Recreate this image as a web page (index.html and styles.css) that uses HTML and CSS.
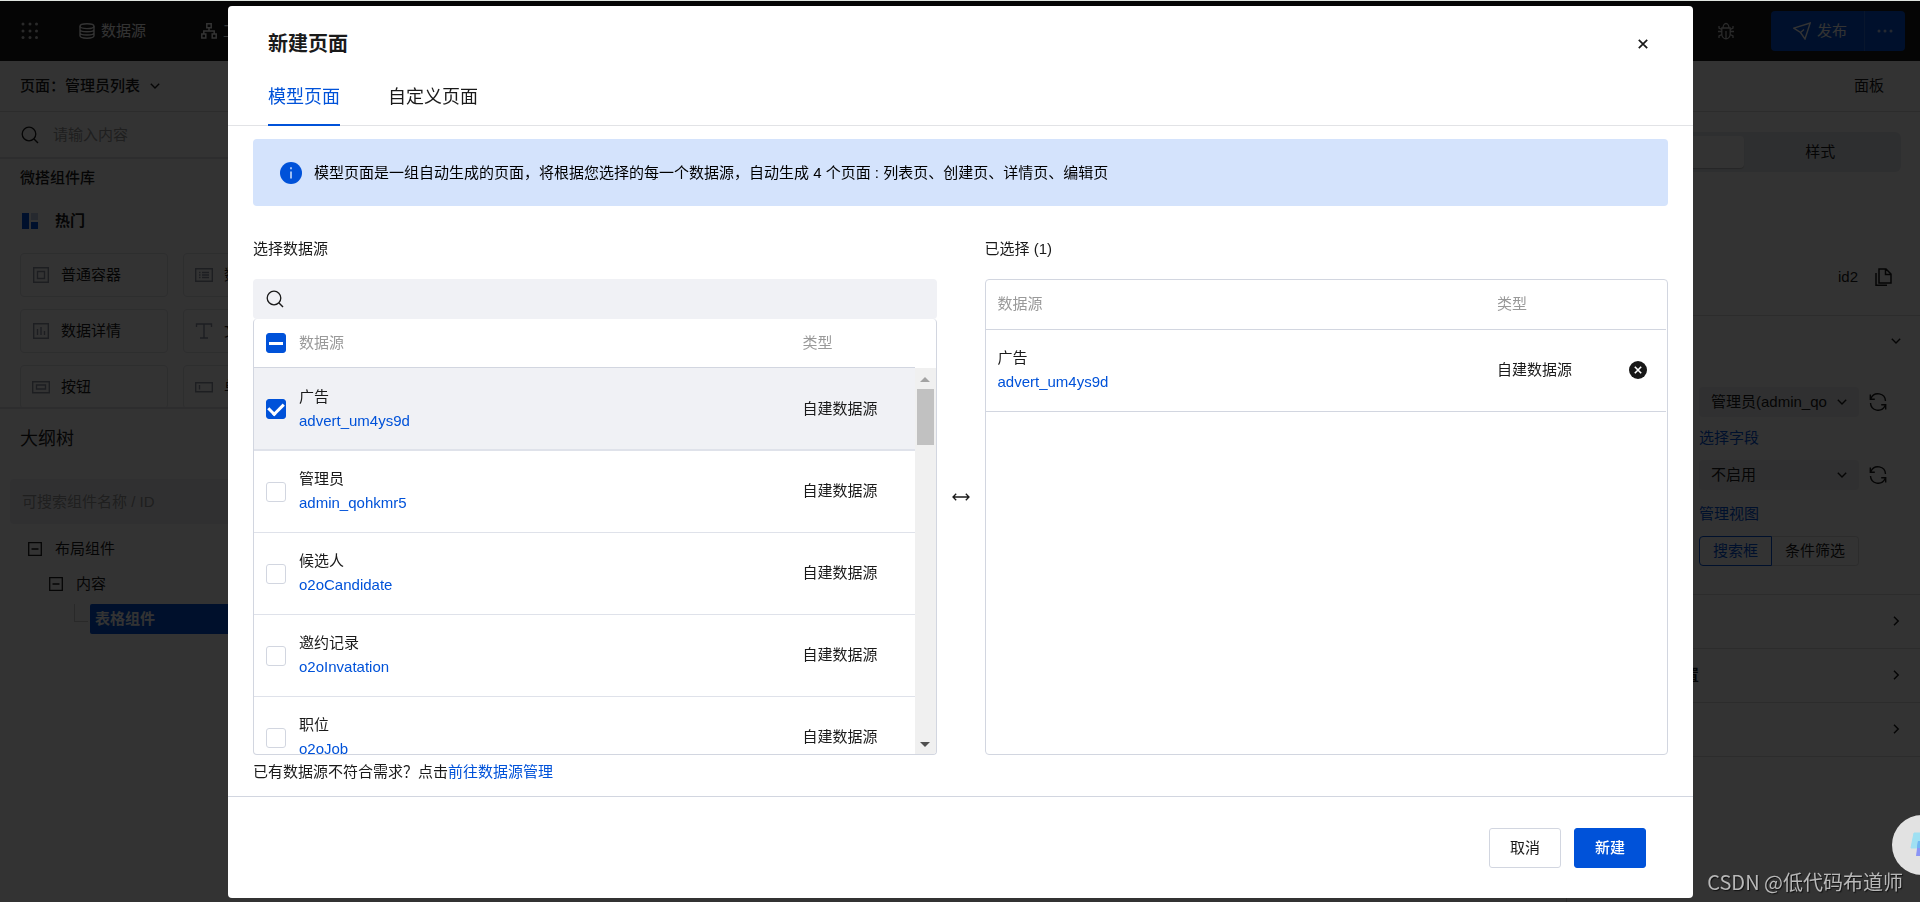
FILE: index.html
```html
<!DOCTYPE html>
<html lang="zh-CN">
<head>
<meta charset="utf-8">
<meta name="viewport" content="width=device-width, initial-scale=1">
<title>新建页面</title>
<link rel="stylesheet" href="styles.css">
</head>
<body>
<svg class="defs" aria-hidden="true">
  <symbol id="i-search" viewBox="0 0 18 18"><circle cx="8" cy="8" r="6.8" fill="none" stroke="currentColor" stroke-width="1.3"/><path d="M12.8 12.8 17 17" stroke="currentColor" stroke-width="1.4"/></symbol>
  <symbol id="i-down" viewBox="0 0 10 10"><path d="M.8 2.8 5 7 9.200 2.800" fill="none" stroke="currentColor" stroke-width="1.4"/></symbol>
  <symbol id="i-right" viewBox="0 0 10 10"><path d="M3 .8 7.200 5 3 9.200" fill="none" stroke="currentColor" stroke-width="1.5"/></symbol>
  <symbol id="i-minus" viewBox="0 0 14 14"><path d="M.7.7h12.600v12.600H.7zM3.500 7h7" fill="none" stroke="currentColor" stroke-width="1.300"/></symbol>
  <symbol id="i-sync" viewBox="0 0 18 18"><path d="M2 5.200A7.600 7.600 0 0 1 16.500 8M16 12.800A7.600 7.600 0 0 1 1.500 10M1.300 1.600v4.600h4.500M16.700 16.400v-4.600h-4.500" fill="none" stroke="currentColor" stroke-width="1.400"/></symbol>
</svg>

<div class="app">
  <header class="topbar">
    <nav class="nav">
      <button class="plain" aria-label="应用"><svg width="18" height="18" viewBox="0 0 18 18" fill="currentColor" opacity=".8"><circle cx="2" cy="2" r="1.500"/><circle cx="9" cy="2" r="1.500"/><circle cx="15.500" cy="2" r="1.500"/><circle cx="2" cy="9" r="1.500"/><circle cx="9" cy="9" r="1.500"/><circle cx="15.500" cy="9" r="1.500"/><circle cx="2" cy="15.500" r="1.500"/><circle cx="9" cy="15.500" r="1.500"/><circle cx="15.500" cy="15.500" r="1.500"/></svg></button>
      <a href="#" class="nav-link"><svg width="16" height="16" viewBox="0 0 16 16" fill="none" stroke="currentColor" stroke-width="1.400"><ellipse cx="8" cy="3.200" rx="7" ry="2.400"/><path d="M1 3.200v9.600c0 1.400 3 2.400 7 2.400s7-1 7-2.400V3.200M1 6.600c0 1.200 3 2.200 7 2.200s7-1 7-2.200M1 9.800C1 11 4 12 8 12s7-1 7-2.200"/></svg>数据源</a>
      <a href="#" class="nav-link"><svg width="16" height="16" viewBox="0 0 16 16" fill="none" stroke="currentColor" stroke-width="1.500"><path d="M5.800.8h4.400v4H5.800zM.8 11h4v4h-4zM11.200 11h4v4h-4zM8 5v3M2.800 11V8h10.400v3"/></svg>工作流</a>
    </nav>
    <div class="actions">
      <button class="plain" aria-label="调试"><svg width="16" height="18" viewBox="0 0 16 18" fill="none" stroke="currentColor" stroke-width="1.300" opacity=".8"><path d="M3.800 6h8.400v6a4.200 4.800 0 0 1-8.400 0zM5 6a3 4.500 0 0 1 6 0M8 9v8M0 9.500h3.800M12.200 9.500H16M1 4v2l2.800 1.500M15 4v2l-2.800 1.500M1 16v-2l2.800-1.500M15 16v-2l-2.800-1.500"/></svg></button>
      <div class="publish">
        <button class="publish-main"><svg width="18" height="18" viewBox="0 0 18 18" fill="none" stroke="currentColor" stroke-width="1.400"><path d="M.8 6.200 17.200 1 12 17 7.500 10.500zM7.500 10.500 11 7.500"/></svg>发布</button>
        <button class="publish-more" aria-label="更多"><svg width="16" height="4" viewBox="0 0 16 4" fill="currentColor"><circle cx="2" cy="2" r="1.500"/><circle cx="8" cy="2" r="1.500"/><circle cx="14" cy="2" r="1.500"/></svg></button>
      </div>
    </div>
  </header>

  <div class="workspace">
    <aside class="side">
      <button class="page-switch">页面：管理员列表<svg width="10" height="10"><use href="#i-down"/></svg></button>
      <label class="side-search"><svg width="18" height="18"><use href="#i-search"/></svg><input type="text" placeholder="请输入内容" aria-label="搜索组件"></label>
      <section class="library">
        <h2>微搭组件库</h2>
        <h3><svg width="16" height="16" viewBox="0 0 16 16"><path fill="#0052d9" d="M0 0h7v16H0zM9 9h7v7H9z"/><path fill="#bccbe8" d="M9 0h7v7H9z"/></svg>热门</h3>
        <div class="cards">
          <button class="card"><svg width="18" height="16" viewBox="0 0 18 16"><path d="M1.700.7h14.600v14.600H1.700zM5.500 4.500h7v7h-7z"/></svg>普通容器</button>
          <button class="card"><svg width="18" height="16" viewBox="0 0 18 16"><path d="M.7 1.700h16.600v12.600H.7zM4 5.500h1.500M7 5.500h7M4 8h1.500M7 8h7M4 10.500h1.500M7 10.500h7"/></svg>数据列表</button>
          <button class="card"><svg width="18" height="16" viewBox="0 0 18 16"><path d="M1.700.7h14.600v14.600H1.700zM5.500 6v6M9 4v8M12.500 8v4"/></svg>数据详情</button>
          <button class="card"><svg width="18" height="16" viewBox="0 0 18 16"><path d="M1.500 4V1h15v3M9 1v14M5 15h8"/></svg>文本</button>
          <button class="card"><svg width="18" height="16" viewBox="0 0 18 16"><path d="M.7 2.700h16.600v11H.7zM4.500 6h9v4h-9z"/></svg>按钮</button>
          <button class="card"><svg width="18" height="16" viewBox="0 0 18 16"><path d="M.7 3.700h16.600v9H.7zM4.500 6v4.500"/></svg>单行输入</button>
        </div>
      </section>
      <section class="outline">
        <h2>大纲树</h2>
        <input class="tree-search" type="text" placeholder="可搜索组件名称 / ID" aria-label="搜索大纲树">
        <ul class="tree">
          <li class="level-1"><svg width="14" height="14"><use href="#i-minus"/></svg>布局组件</li>
          <li class="level-2"><svg width="14" height="14"><use href="#i-minus"/></svg>内容</li>
          <li class="level-3"><i class="branch"></i><span class="current">表格组件</span></li>
        </ul>
      </section>
    </aside>

    <aside class="props">
      <div class="props-head">面板</div>
      <div class="props-basic">
        <div class="segment"><button class="on">属性</button><button>样式</button></div>
        <div class="ident">id2<svg width="17" height="18" viewBox="0 0 17 18" fill="none" stroke="currentColor" stroke-width="1.500"><path d="M4 1h7l5 5v9H4zM10.500 1v5.500H16M1 5v12.200h11"/></svg></div>
      </div>
      <div class="props-data">
        <svg class="fold" width="10" height="10"><use href="#i-down"/></svg>
        <div class="field"><button class="pick">管理员(admin_qo<svg width="10" height="10"><use href="#i-down"/></svg></button><svg width="18" height="18"><use href="#i-sync"/></svg></div>
        <a href="#">选择字段</a>
        <div class="field"><button class="pick">不启用<svg width="10" height="10"><use href="#i-down"/></svg></button><svg width="18" height="18"><use href="#i-sync"/></svg></div>
        <a href="#">管理视图</a>
        <div class="toggle"><button class="on">搜索框</button><button>条件筛选</button></div>
      </div>
      <div class="fold-row"><span></span><svg width="10" height="10"><use href="#i-right"/></svg></div>
      <div class="fold-row"><span>全局按钮区设置</span><svg width="10" height="10"><use href="#i-right"/></svg></div>
      <div class="fold-row"><span></span><svg width="10" height="10"><use href="#i-right"/></svg></div>
    </aside>
  </div>
</div>

<div class="mask">
  <section class="modal" role="dialog" aria-labelledby="dlg-title">
    <header class="modal-head">
      <h1 id="dlg-title">新建页面</h1>
      <button class="plain" aria-label="关闭"><svg width="10" height="10" viewBox="0 0 10 10"><path d="M.8.8l8.400 8.400M9.200.8.8 9.200" stroke="currentColor" stroke-width="1.700"/></svg></button>
    </header>
    <div class="tabs" role="tablist">
      <button role="tab" aria-selected="true" class="tab on">模型页面</button>
      <button role="tab" aria-selected="false" class="tab">自定义页面</button>
    </div>
    <div class="modal-body">
      <p class="alert"><svg width="22" height="22" viewBox="0 0 22 22"><circle cx="11" cy="11" r="11" fill="#0052d9"/><path d="M11 9.500v7M11 5.300v2" stroke="#d4e3fc" stroke-width="1.500"/></svg>模型页面是一组自动生成的页面，将根据您选择的每一个数据源，自动生成 4 个页面 : 列表页、创建页、详情页、编辑页</p>
      <div class="transfer">
        <div class="pane">
          <h2>选择数据源</h2>
          <label class="search"><svg width="18" height="18"><use href="#i-search"/></svg><input type="text" aria-label="搜索数据源"></label>
          <div class="box source">
            <table class="list">
              <thead><tr><th><input type="checkbox" class="check partial" aria-label="全选"></th><th>数据源</th><th>类型</th></tr></thead>
              <tbody>
                <tr class="picked"><td><input type="checkbox" class="check" id="c1" checked></td><td><label for="c1">广告</label><a href="#">advert_um4ys9d</a></td><td>自建数据源</td></tr>
                <tr><td><input type="checkbox" class="check" id="c2"></td><td><label for="c2">管理员</label><a href="#">admin_qohkmr5</a></td><td>自建数据源</td></tr>
                <tr><td><input type="checkbox" class="check" id="c3"></td><td><label for="c3">候选人</label><a href="#">o2oCandidate</a></td><td>自建数据源</td></tr>
                <tr><td><input type="checkbox" class="check" id="c4"></td><td><label for="c4">邀约记录</label><a href="#">o2oInvatation</a></td><td>自建数据源</td></tr>
                <tr><td><input type="checkbox" class="check" id="c5"></td><td><label for="c5">职位</label><a href="#">o2oJob</a></td><td>自建数据源</td></tr>
              </tbody>
            </table>
            <div class="scrollbar" aria-hidden="true">
              <svg width="10" height="5" viewBox="0 0 10 5"><path d="M0 5 5 0l5 5z" fill="#a3a3a3"/></svg>
              <i class="thumb"></i>
              <svg width="10" height="5" viewBox="0 0 10 5"><path d="M0 0l5 5 5-5z" fill="#505050"/></svg>
            </div>
          </div>
        </div>
        <svg class="swap" width="18" height="8" viewBox="0 0 18 8" fill="none" stroke="currentColor" stroke-width="1.300"><path d="M1 4h16M4.200.8 1 4l3.200 3.200M13.800.8 17 4l-3.200 3.200"/></svg>
        <div class="pane">
          <h2>已选择 (1)</h2>
          <div class="box">
            <table class="list chosen">
              <thead><tr><th>数据源</th><th>类型</th><th></th></tr></thead>
              <tbody>
                <tr><td><span>广告</span><a href="#">advert_um4ys9d</a></td><td>自建数据源</td><td><button class="plain" aria-label="移除"><svg width="18" height="18" viewBox="0 0 18 18"><circle cx="9" cy="9" r="9" fill="#181818"/><path d="M5.800 5.800l6.400 6.400M12.200 5.800l-6.400 6.400" stroke="#fff" stroke-width="1.600"/></svg></button></td></tr>
              </tbody>
            </table>
          </div>
        </div>
      </div>
      <p class="hint">已有数据源不符合需求？点击<a href="#">前往数据源管理</a></p>
    </div>
    <footer class="modal-foot">
      <button class="btn">取消</button>
      <button class="btn primary">新建</button>
    </footer>
  </section>
</div>

<button class="helper" aria-label="助手"><svg width="60" height="60" viewBox="0 0 60 60"><path d="M22 18h14l-3 15H19z" fill="#9fe0f2" stroke="#9fe0f2" stroke-width="1" stroke-linejoin="round"/><path d="M26 26h14l-3 15H24z" fill="#8b95f5"/><path d="M26 26h8l-2 7h-7z" fill="#6db8f2"/></svg></button>
<div class="watermark">CSDN @低代码布道师</div>
</body>
</html>
```
FILE: styles.css
```css
* { box-sizing: border-box; }
body {
  margin: 0;
  height: 100vh;
  overflow: hidden;
  font: 15px/24px "Liberation Sans", "Noto Sans CJK SC", sans-serif;
  color: #1a1a1a;
  background: #fff;
}
h1, h2, h3, p, ul { margin: 0; padding: 0; font-weight: 400; }
h2, h3 { font-size: 15px; }
button, input { font: inherit; color: inherit; margin: 0; }
button { padding: 0; border: 0; background: none; cursor: pointer; }
input[type="text"] { padding: 0; border: 0; outline: 0; background: none; min-width: 0; }
input::placeholder { color: #999; opacity: 1; }
a { color: #0052d9; text-decoration: none; }
svg { flex: none; display: block; }
.defs { position: absolute; width: 0; height: 0; }
.plain { display: flex; align-items: center; justify-content: center; }

/* Editor behind the dialog */
.app { height: 100%; display: flex; flex-direction: column; }
.topbar {
  height: 61px;
  flex: none;
  display: flex;
  align-items: center;
  justify-content: space-between;
  padding: 0 15px 0 21px;
  background: #1a1a1a;
  color: #fff;
}
.nav { display: flex; align-items: center; }
.nav-link { display: flex; align-items: center; gap: 6px; margin-left: 40px; color: inherit; }
.nav-link + .nav-link { margin-left: 55px; }
.actions { display: flex; align-items: center; gap: 37px; }
.publish { display: flex; height: 40px; border-radius: 4px; background: #0052d9; }
.publish-main { display: flex; align-items: center; gap: 6px; padding: 0 17px 0 22px; border-right: 1px solid #2c6fe0; }
.publish-more { display: flex; align-items: center; justify-content: center; width: 40px; color: #b8cdf5; }

.workspace { flex: 1; min-height: 0; display: flex; justify-content: space-between; }
.side { width: 330px; display: flex; flex-direction: column; }
.page-switch {
  display: flex;
  align-items: center;
  gap: 10px;
  height: 51px;
  flex: none;
  padding: 0 20px;
  border-bottom: 1px solid #ddd;
  font-weight: 500;
}
.side-search { display: flex; align-items: center; gap: 14px; height: 47px; flex: none; padding: 0 21px; border-bottom: 2px solid #e2e2e4; }
.library { height: 250px; flex: none; overflow: hidden; padding: 7px 16px 0 20px; border-bottom: 2px solid #e2e2e4; }
.library h2 { font-weight: 500; }
.library h3 { display: flex; align-items: center; gap: 17px; margin: 19px 0 20px 2px; font-weight: 700; }
.cards { display: grid; grid-template-columns: 148px 148px; gap: 12px 15px; }
.card { display: flex; align-items: center; gap: 11px; height: 44px; padding-left: 11px; border: 1px solid #e2e3e6; border-radius: 4px; }
.card svg { fill: none; stroke: #8f96a6; stroke-width: 1.4; }
.outline { padding: 18px 10px 0; }
.outline h2 { font-size: 18px; margin-left: 10px; }
.tree-search[type="text"] { display: block; width: 100%; height: 45px; margin: 28px 0 7px; padding: 0 12px; border-radius: 4px; background: #f0f1f5; }
.tree { list-style: none; }
.tree li { display: flex; align-items: center; gap: 13px; height: 35px; }
.tree .level-1 { padding-left: 18px; }
.tree .level-2 { padding-left: 39px; }
.tree .level-3 { padding-left: 64px; gap: 2px; }
.branch { width: 14px; height: 18px; margin-bottom: 12px; border: solid #ccc; border-width: 0 0 1px 1px; }
.current { flex: 1; padding: 3px 5px; border-radius: 2px; background: #0052d9; color: #fff; font-weight: 700; }

.props { width: 354px; border-left: 1px solid #ddd; }
.props-head { height: 51px; padding: 13px 36px 0 0; border-bottom: 1px solid #ddd; text-align: right; }
.props-basic { height: 204px; padding: 20px 19px 0; border-bottom: 1px solid #ddd; }
.segment { display: flex; padding: 4px; border-radius: 6px; background: #e7eaef; }
.segment button { flex: 1; height: 32px; border-radius: 4px; }
.segment .on { background: #fff; box-shadow: 0 1px 1px #bbb; }
.ident { display: flex; align-items: center; justify-content: flex-end; gap: 17px; margin: 93px 9px 0 0; }
.props-data { display: flex; flex-direction: column; align-items: flex-start; height: 279px; padding: 20px 19px 0 132px; border-bottom: 1px solid #ddd; }
.fold { align-self: flex-end; margin-bottom: 41px; }
.field { display: flex; align-items: center; gap: 10px; margin-bottom: 9px; }
.field + a { margin-bottom: 10px; }
.field ~ .field { margin-bottom: 12px; }
.pick { display: flex; align-items: center; justify-content: space-between; width: 160px; height: 30px; padding: 0 12px; border-radius: 4px; background: #f0f1f3; }
.toggle { display: flex; }
.toggle button { height: 30px; padding: 0 13px; border: 1px solid #ddd; border-left: 0; border-radius: 0 4px 4px 0; }
.toggle .on { border: 1px solid #0052d9; border-radius: 4px 0 0 4px; color: #0052d9; }
.fold-row { display: flex; align-items: center; justify-content: space-between; height: 54px; padding: 0 19px 2px 27px; border-bottom: 1px solid #ddd; font-weight: 700; }

/* Dialog */
.mask {
  position: fixed;
  inset: 0;
  display: flex;
  padding: 5px 227px 4px 228px;
  background: rgba(0, 0, 0, .8);
  border-top: 1px solid #dfe4df;
}
.modal { flex: 1; min-width: 0; display: flex; flex-direction: column; border-radius: 4px; background: #fff; }
.modal-head { display: flex; align-items: center; justify-content: space-between; padding: 22px 45px 0 40px; }
.modal-head h1 { font-size: 20px; line-height: 32px; font-weight: 700; }
.tabs { display: flex; gap: 48px; height: 66px; padding: 0 40px; border-bottom: 1px solid #e2e3e6; }
.tab { height: 66px; padding-top: 9px; font-size: 18px; border-bottom: 2px solid transparent; }
.tab.on { color: #0052d9; border-color: #0052d9; }
.modal-body { flex: 1; min-height: 0; display: flex; flex-direction: column; padding: 13px 25px; }
.alert { display: flex; align-items: center; gap: 12px; min-height: 67px; padding: 0 27px; border-radius: 4px; background: #d4e3fc; color: #000; }
.transfer { flex: 1; min-height: 0; display: flex; margin-top: 31px; }
.pane { flex: 1; min-width: 0; display: flex; flex-direction: column; }
.pane h2 { margin-bottom: 18px; }
.swap { align-self: center; margin: 2px 15px 0; }
.search { display: flex; align-items: center; gap: 12px; height: 40px; flex: none; padding: 0 13px; border-radius: 4px; background: #f0f1f5; }
.search input { flex: 1; }
.box { flex: 1; min-height: 0; overflow: hidden; border: 1px solid #d2d6e0; border-radius: 4px; }
.source { display: flex; border-top: 0; }
.list { flex: 1; display: block; border-spacing: 0; }
.list thead, .list tbody { display: block; }
.list tr { display: grid; grid-template-columns: 33px 1fr 112px; align-items: center; height: 82px; padding-left: 12px; border-bottom: 1px solid #dfe2ea; }
.list thead tr { height: 49px; border-color: #d2d6e0; }
.list th, .list td { padding: 0; text-align: left; font-weight: 400; }
.list th { color: #999; }
.list td label, .list td span, .list td a { display: block; }
.list tr:not(.picked) td + td { padding-bottom: 2px; }
.list .picked { height: 83px; border-bottom-width: 2px; background: #f0f1f5; }
.list.chosen tr { grid-template-columns: 1fr 132px 37px; margin-right: 1px; padding-bottom: 2px; border-color: #d2d6e0; }
.list.chosen tr td + td { padding-bottom: 0; }
.list.chosen thead tr { height: 50px; }
.check { display: block; appearance: none; width: 20px; height: 20px; border: 1px solid #d2d6e0; border-radius: 3px; background: #fff; }
.check.partial, .check:checked { display: grid; place-items: center; border-color: #0052d9; background: #0052d9; }
.check.partial::before { content: ""; width: 14px; height: 3px; background: #fff; }
.check:checked::before { content: ""; width: 7px; height: 12px; margin-bottom: 4px; border: solid #fff; border-width: 0 3px 3px 0; transform: rotate(45deg); }
.scrollbar { display: flex; flex-direction: column; align-items: center; width: 21px; margin-top: 49px; padding: 9px 0 7px; background: #f0f0f0; }
.thumb { width: 17px; height: 56px; margin: 7px 0 auto; background: #c1c1c1; }
.hint { margin-top: 5px; line-height: 23px; }
.modal-foot { display: flex; justify-content: flex-end; gap: 13px; padding: 31px 47px 30px; border-top: 1px solid #d2d6e0; }
.btn { width: 72px; height: 40px; border: 1px solid #d2d6e0; border-radius: 3px; }
.btn.primary { border-color: #0052d9; background: #0052d9; color: #fff; font-weight: 500; }

/* Floating pieces over everything */
.helper { position: fixed; right: -32px; bottom: 27px; border-radius: 50%; background: #e2e2e2; }
.watermark { position: fixed; right: 17px; bottom: 6px; font: 20px/28px "Noto Sans CJK SC", sans-serif; color: #b8b8b8; text-shadow: 1px 1px 1px #111; }
```
